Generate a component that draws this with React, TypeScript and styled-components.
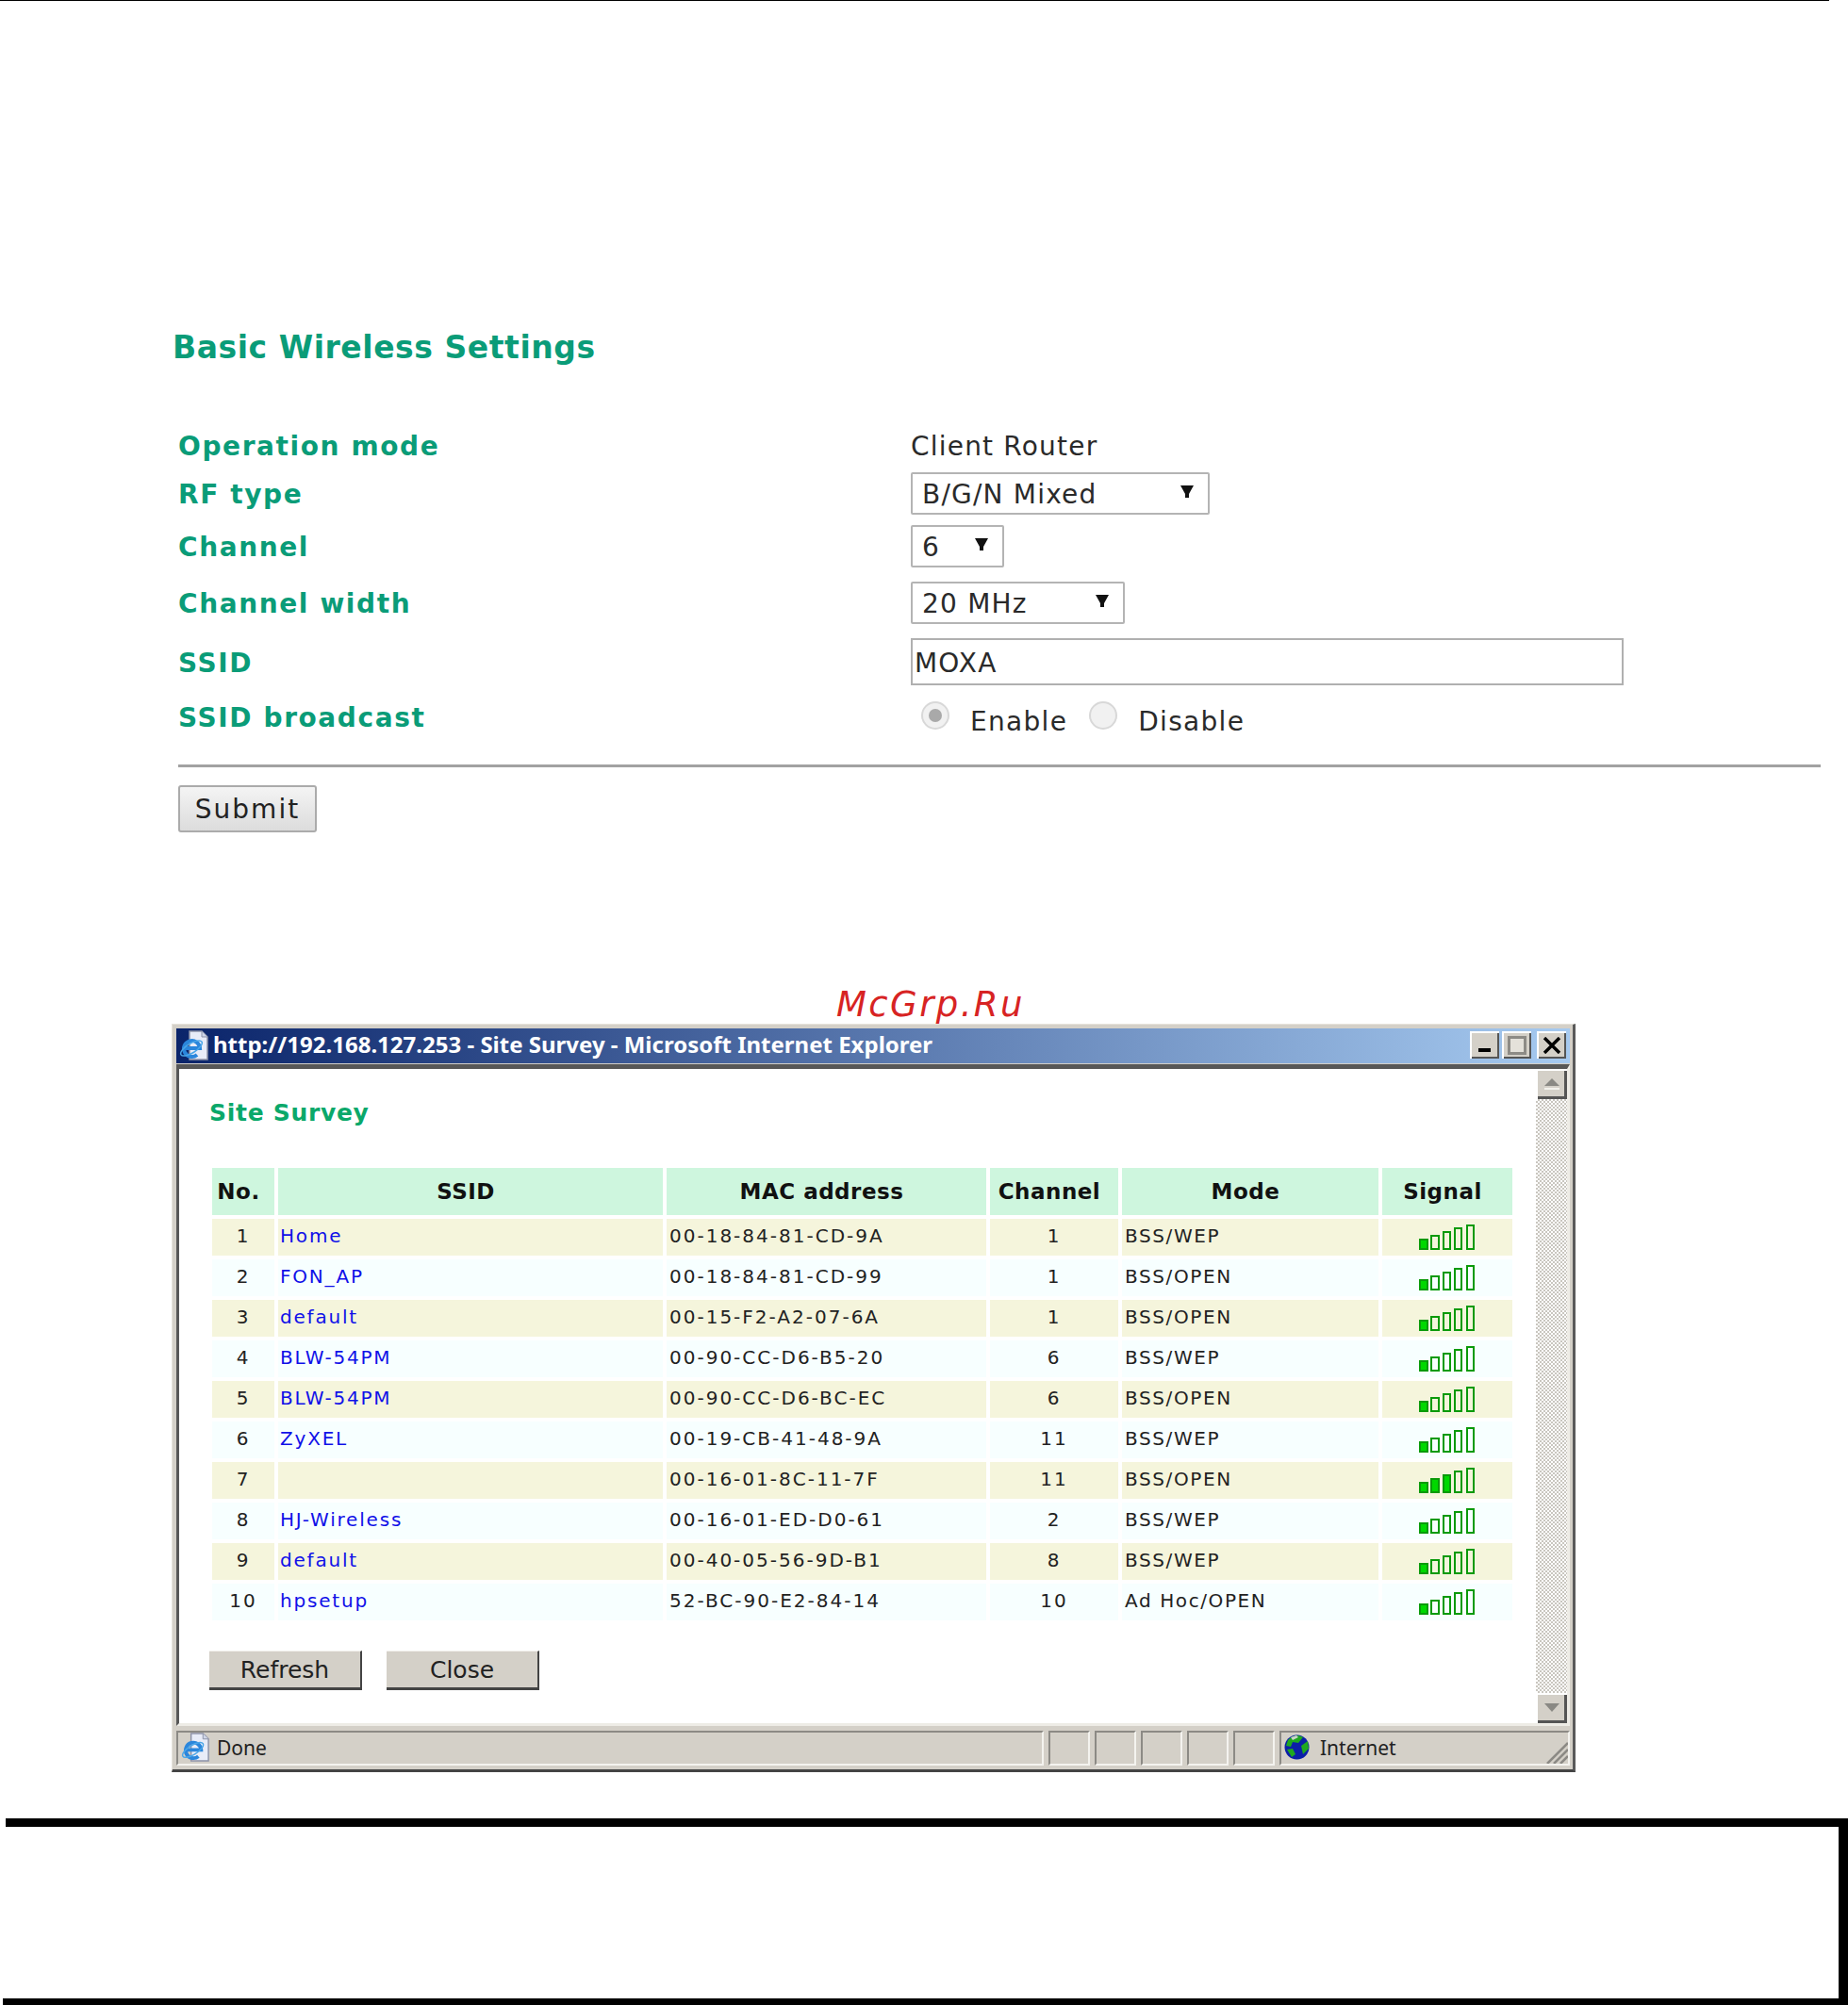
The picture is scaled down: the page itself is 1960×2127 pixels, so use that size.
import React from "react";
import styled, { createGlobalStyle } from "styled-components";

const GlobalStyle = createGlobalStyle`
  * { box-sizing: border-box; }
  html, body { margin: 0; padding: 0; background: #fff; }
  body { font-family: "DejaVu Sans", sans-serif; color: #222; }
`;

const Page = styled.div`
  width: 1960px;
  height: 2127px;
  overflow: hidden;
  background: #fff;
`;

const TopRule = styled.div`
  width: 1940px;
  height: 1px;
  background: #000;
`;

const FormSection = styled.section`
  margin: 348px 0 0 183px;
`;

const Heading = styled.h1`
  margin: 0;
  font-size: 33px;
  line-height: 40px;
  letter-spacing: 0.55px;
  font-weight: 700;
  color: #0a9c78;
`;

const FormGrid = styled.div`
  margin: 68px 0 0 6px;
  width: 1742px;
`;

const FormRow = styled.div<{ $top?: number }>`
  display: flex;
  align-items: baseline;
  margin-top: ${(p) => p.$top ?? 0}px;
`;

const FieldLabel = styled.div`
  width: 777px;
  flex: none;
  font-size: 28px;
  font-weight: 700;
  letter-spacing: 1.6px;
  color: #0a9c78;
`;

const FieldValue = styled.div`
  font-size: 28px;
  letter-spacing: 1.2px;
  color: #2a2a2a;
`;

const SelectBox = styled.div<{ $width: number }>`
  width: ${(p) => p.$width}px;
  height: 45px;
  display: flex;
  align-items: center;
  justify-content: space-between;
  padding: 2px 14px 0 10px;
  background: #fff;
  border: 2px solid #b4b4b4;
  border-radius: 2px;
  font-size: 28px;
  letter-spacing: 1.2px;
  color: #2a2a2a;
`;

const TextInput = styled.div`
  width: 756px;
  height: 50px;
  display: flex;
  align-items: center;
  padding: 2px 0 0 2px;
  border: 2px solid #b0b0b0;
  font-size: 28px;
  letter-spacing: 1.2px;
  color: #2a2a2a;
`;

const RadioGroup = styled.div`
  display: flex;
  align-items: baseline;
  align-self: flex-start;
  margin-top: 4px;
  padding-left: 11px;
`;

const RadioDot = styled.span<{ $checked?: boolean }>`
  position: relative;
  top: -9px;
  display: inline-flex;
  align-items: center;
  justify-content: center;
  width: 30px;
  height: 30px;
  margin-right: 22px;
  border-radius: 50%;
  border: 2px solid #d8d8d8;
  background: #f1f1f1;
  &::after {
    content: "";
    width: 14px;
    height: 14px;
    border-radius: 50%;
    background: ${(p) => (p.$checked ? "#a9a9a9" : "transparent")};
  }
`;

const RadioText = styled.span`
  margin-right: 23px;
  font-size: 28px;
  letter-spacing: 1.3px;
  color: #2a2a2a;
`;

const Rule = styled.div`
  margin: 28px 0 0 6px;
  width: 1742px;
  height: 3px;
  background: #a2a2a2;
`;

const SubmitButton = styled.button`
  display: block;
  margin: 19px 0 0 6px;
  width: 147px;
  height: 50px;
  padding: 0;
  border: 2px solid #ababab;
  border-radius: 3px;
  background: linear-gradient(#f4f4f4, #dcdcdc);
  font-family: inherit;
  font-size: 28px;
  letter-spacing: 2px;
  color: #222;
`;

const Watermark = styled.div`
  margin: 162px 0 0 887px;
  font-size: 37px;
  line-height: 41px;
  font-style: italic;
  letter-spacing: 2.4px;
  color: #d72323;
`;

const Window = styled.div`
  margin: 0 0 0 182px;
  width: 1489px;
  height: 794px;
  padding: 4px 3px 3px 4px;
  display: flex;
  flex-direction: column;
  background: #d4d0c8;
  border-top: 1px solid #e6e3dc;
  border-left: 1px solid #e6e3dc;
  border-right: 3px solid #5a5a5a;
  border-bottom: 3px solid #444;
`;

const TitleBar = styled.div`
  flex: none;
  height: 37px;
  display: flex;
  align-items: center;
  padding: 0 4px 2px 3px;
  background: linear-gradient(90deg, #0a246a, #a6caf0);
`;

const TitleText = styled.div`
  flex: 1;
  margin: 0 0 2px 4px;
  font-family: "Noto Sans", sans-serif;
  font-size: 24px;
  font-weight: 700;
  color: #fff;
  white-space: nowrap;
`;

const CaptionButton = styled.div<{ $gap?: number }>`
  width: 31px;
  height: 29px;
  margin-left: ${(p) => p.$gap ?? 3}px;
  display: flex;
  align-items: center;
  justify-content: center;
  background: #d4d0c8;
  box-shadow: inset 2px 2px 0 #fff, inset -2px -2px 0 #555;
`;

const ClientFrame = styled.div`
  flex: none;
  height: 702px;
  margin-top: 1px;
  display: flex;
  border-top: 5px solid #575757;
  border-left: 3px solid #575757;
  border-bottom: 3px solid #eeece6;
  border-right: 3px solid #eeece6;
`;

const Content = styled.div`
  flex: 1;
  padding: 32px 0 0 32px;
  background: #fff;
`;

const SurveyTitle = styled.h2`
  margin: 0;
  font-size: 25px;
  line-height: 30px;
  letter-spacing: 0.7px;
  font-weight: 700;
  color: #0aa86a;
`;

const SurveyTable = styled.table`
  margin: 39px 0 0 -1px;
  table-layout: fixed;
  width: 1387px;
  border-collapse: separate;
  border-spacing: 4px;
`;

const HeadCell = styled.th`
  height: 50px;
  padding: 0 10px 0 0;
  background: #cef6de;
  font-size: 23px;
  font-weight: 700;
  letter-spacing: 0.5px;
  color: #111;
  text-align: center;
`;

const Row = styled.tr<{ $odd: boolean }>`
  & > td {
    background: ${(p) => (p.$odd ? "#f5f5dc" : "#f7ffff")};
  }
`;

const BodyCell = styled.td<{ $align?: string }>`
  height: 39px;
  padding: 0 3px 3px;
  font-size: 20px;
  letter-spacing: 2px;
  color: #222;
  text-align: ${(p) => p.$align ?? "left"};
  white-space: nowrap;
`;

const SignalCell = styled.td`
  height: 39px;
  padding: 0 3px;
`;

const SsidLink = styled.a`
  margin-left: -1px;
  color: #1010e8;
  letter-spacing: 1.8px;
`;

const ModeText = styled.span`
  letter-spacing: 1.6px;
`;

const ButtonRow = styled.div`
  display: flex;
  gap: 26px;
  margin-top: 28px;
`;

const FlatButton = styled.button`
  width: 162px;
  height: 42px;
  padding: 0;
  background: #d4d0c8;
  border: none;
  border-top: 1px solid #f2f0ec;
  border-right: 2px solid #444;
  border-bottom: 3px solid #444;
  font-family: inherit;
  font-size: 25px;
  color: #222;
`;

const Scrollbar = styled.div`
  flex: none;
  width: 33px;
  display: flex;
  flex-direction: column;
  justify-content: space-between;
  background: repeating-conic-gradient(#c9c6bf 0 25%, #fff 0 50%) 0 0 / 4px 4px;
`;

const ScrollButton = styled.div`
  height: 32px;
  display: flex;
  align-items: center;
  justify-content: center;
  background: #d4d0c8;
  box-shadow: inset 2px 2px 0 #fff, inset -3px -3px 0 #555;
`;

const StatusBar = styled.div`
  flex: 1;
  display: flex;
  gap: 5px;
  padding: 5px 0 1px 0;
`;

const StatusPanel = styled.div<{ $width?: number; $gap?: number }>`
  flex: ${(p) => (p.$width ? "none" : "1")};
  width: ${(p) => (p.$width ? `${p.$width}px` : "auto")};
  display: flex;
  align-items: center;
  gap: ${(p) => p.$gap ?? 7}px;
  padding: 0 0 2px 3px;
  border-top: 2px solid #8c8a85;
  border-left: 2px solid #8c8a85;
  border-right: 2px solid #f4f3ef;
  border-bottom: 2px solid #f4f3ef;
  font-family: "Noto Sans", sans-serif;
  font-size: 21px;
  color: #222;
  position: relative;
`;

const Grip = styled.svg`
  position: absolute;
  right: 0;
  bottom: 0;
`;

const BottomFrame = styled.div`
  margin: 49px 0 0 6px;
  height: 191px;
  border-top: 9px solid #000;
  border-right: 10px solid #000;
`;

const BottomBar = styled.div`
  margin-left: 3px;
  height: 8px;
  background: #000;
`;

const ArrowSvg = styled.svg`
  flex: none;
  margin-top: -6px;
`;

const SignalSvg = styled.svg`
  display: block;
  margin: 0 auto;
`;

const ArrowGlyph = () => (
  <ArrowSvg width="16" height="15" viewBox="0 0 16 15">
    <path d="M1 1H15L10 10V14H6V10Z" fill="#111" />
  </ArrowSvg>
);

const SignalBars = ({ filled }: { filled: number }) => {
  const bars = [
    { x: 1, w: 8, h: 11 },
    { x: 13, w: 8, h: 15 },
    { x: 26, w: 7, h: 19 },
    { x: 38, w: 7, h: 23 },
    { x: 51, w: 7, h: 26 },
  ];
  return (
    <SignalSvg width="60" height="27" viewBox="0 0 60 27">
      {bars.map((b, i) => (
        <rect
          key={b.x}
          x={b.x}
          y={27 - b.h}
          width={b.w}
          height={b.h - 1}
          fill={i < filled ? "#00d800" : "none"}
          stroke="#0a9a0a"
          strokeWidth="2"
        />
      ))}
    </SignalSvg>
  );
};

const IeIcon = ({ size }: { size: number }) => (
  <svg width={size} height={size} viewBox="0 0 32 32">
    <path d="M11 1H24L30 7V31H11Z" fill="#e8ecf8" stroke="#8d93a8" strokeWidth="1.5" />
    <path d="M24 1V7H30" fill="#cfd6e8" stroke="#8d93a8" strokeWidth="1" />
    <path d="M6 19H22A8.5 8.5 0 1 0 19 26" fill="none" stroke="#2a86dc" strokeWidth="4" />
    <ellipse
      cx="13"
      cy="19"
      rx="13"
      ry="5"
      transform="rotate(-32 13 19)"
      fill="none"
      stroke="#4aa6e8"
      strokeWidth="1.5"
    />
  </svg>
);

const Globe = () => (
  <svg width="27" height="27" viewBox="0 0 27 27">
    <circle cx="13.5" cy="13.5" r="13" fill="#0b1fa8" />
    <path d="M4 6C8 1 15 0 20 3L15 9L9 8L7 13L2 12Z" fill="#1fa81f" />
    <path d="M18 12L25 7L26 15L20 21Z" fill="#1fa81f" />
    <path d="M3 16L9 15L12 21L8 24Z" fill="#1fa81f" />
    <path d="M7 3L13 1L15 3L9 6Z" fill="#c8d4c8" />
  </svg>
);

const columns = [66, 408, 339, 136, 272, 138];
const headers = ["No.", "SSID", "MAC address", "Channel", "Mode", "Signal"];

const networks = [
  { ssid: "Home", mac: "00-18-84-81-CD-9A", channel: 1, mode: "BSS/WEP", signal: 1 },
  { ssid: "FON_AP", mac: "00-18-84-81-CD-99", channel: 1, mode: "BSS/OPEN", signal: 1 },
  { ssid: "default", mac: "00-15-F2-A2-07-6A", channel: 1, mode: "BSS/OPEN", signal: 1 },
  { ssid: "BLW-54PM", mac: "00-90-CC-D6-B5-20", channel: 6, mode: "BSS/WEP", signal: 1 },
  { ssid: "BLW-54PM", mac: "00-90-CC-D6-BC-EC", channel: 6, mode: "BSS/OPEN", signal: 1 },
  { ssid: "ZyXEL", mac: "00-19-CB-41-48-9A", channel: 11, mode: "BSS/WEP", signal: 1 },
  { ssid: "", mac: "00-16-01-8C-11-7F", channel: 11, mode: "BSS/OPEN", signal: 3 },
  { ssid: "HJ-Wireless", mac: "00-16-01-ED-D0-61", channel: 2, mode: "BSS/WEP", signal: 1 },
  { ssid: "default", mac: "00-40-05-56-9D-B1", channel: 8, mode: "BSS/WEP", signal: 1 },
  { ssid: "hpsetup", mac: "52-BC-90-E2-84-14", channel: 10, mode: "Ad Hoc/OPEN", signal: 1 },
];

export default function App() {
  return (
    <Page>
      <GlobalStyle />
      <TopRule />

      <FormSection>
        <Heading>Basic Wireless Settings</Heading>
        <FormGrid>
          <FormRow>
            <FieldLabel>Operation mode</FieldLabel>
            <FieldValue>Client Router</FieldValue>
          </FormRow>
          <FormRow $top={11}>
            <FieldLabel>RF type</FieldLabel>
            <SelectBox $width={317}>
              B/G/N Mixed <ArrowGlyph />
            </SelectBox>
          </FormRow>
          <FormRow $top={11}>
            <FieldLabel>Channel</FieldLabel>
            <SelectBox $width={99}>
              6 <ArrowGlyph />
            </SelectBox>
          </FormRow>
          <FormRow $top={15}>
            <FieldLabel>Channel width</FieldLabel>
            <SelectBox $width={227}>
              20 MHz <ArrowGlyph />
            </SelectBox>
          </FormRow>
          <FormRow $top={15}>
            <FieldLabel>SSID</FieldLabel>
            <TextInput>MOXA</TextInput>
          </FormRow>
          <FormRow $top={18}>
            <FieldLabel>SSID broadcast</FieldLabel>
            <RadioGroup>
              <RadioDot $checked />
              <RadioText>Enable</RadioText>
              <RadioDot />
              <RadioText>Disable</RadioText>
            </RadioGroup>
          </FormRow>
        </FormGrid>
        <Rule />
        <SubmitButton>Submit</SubmitButton>
      </FormSection>

      <Watermark>McGrp.Ru</Watermark>

      <Window>
        <TitleBar>
          <IeIcon size={32} />
          <TitleText>http://192.168.127.253 - Site Survey - Microsoft Internet Explorer</TitleText>
          <CaptionButton>
            <svg width="16" height="16" viewBox="0 0 16 16">
              <rect x="1" y="11" width="13" height="4" fill="#000" />
            </svg>
          </CaptionButton>
          <CaptionButton>
            <svg width="20" height="20" viewBox="0 0 20 20">
              <rect x="1.5" y="1.5" width="17" height="17" fill="#e4e1da" stroke="#8d8b86" strokeWidth="3" />
            </svg>
          </CaptionButton>
          <CaptionButton $gap={6}>
            <svg width="20" height="18" viewBox="0 0 20 18">
              <path d="M2 1L18 17M18 1L2 17" stroke="#000" strokeWidth="3.4" />
            </svg>
          </CaptionButton>
        </TitleBar>

        <ClientFrame>
          <Content>
            <SurveyTitle>Site Survey</SurveyTitle>
            <SurveyTable>
              <colgroup>
                {columns.map((w, i) => (
                  <col key={i} width={w} />
                ))}
              </colgroup>
              <thead>
                <tr>
                  {headers.map((h) => (
                    <HeadCell key={h}>{h}</HeadCell>
                  ))}
                </tr>
              </thead>
              <tbody>
                {networks.map((n, i) => (
                  <Row key={n.mac} $odd={i % 2 === 0}>
                    <BodyCell $align="center">{i + 1}</BodyCell>
                    <BodyCell>
                      <SsidLink>{n.ssid}</SsidLink>
                    </BodyCell>
                    <BodyCell>{n.mac}</BodyCell>
                    <BodyCell $align="center">{n.channel}</BodyCell>
                    <BodyCell>
                      <ModeText>{n.mode}</ModeText>
                    </BodyCell>
                    <SignalCell>
                      <SignalBars filled={n.signal} />
                    </SignalCell>
                  </Row>
                ))}
              </tbody>
            </SurveyTable>
            <ButtonRow>
              <FlatButton>Refresh</FlatButton>
              <FlatButton>Close</FlatButton>
            </ButtonRow>
          </Content>
          <Scrollbar>
            <ScrollButton>
              <svg width="18" height="14" viewBox="0 0 18 14">
                <path d="M9 1L17 9H1Z" fill="#8a8984" />
                <rect x="1" y="11" width="16" height="2" fill="#f2f1ec" />
              </svg>
            </ScrollButton>
            <ScrollButton>
              <svg width="18" height="12" viewBox="0 0 18 12">
                <path d="M1 1H17L9 10Z" fill="#8a8984" />
              </svg>
            </ScrollButton>
          </Scrollbar>
        </ClientFrame>

        <StatusBar>
          <StatusPanel>
            <IeIcon size={31} />
            Done
          </StatusPanel>
          <StatusPanel $width={44} />
          <StatusPanel $width={44} />
          <StatusPanel $width={44} />
          <StatusPanel $width={44} />
          <StatusPanel $width={44} />
          <StatusPanel $width={308} $gap={11}>
            <Globe />
            Internet
            <Grip width="24" height="24" viewBox="0 0 24 24">
              <path d="M2 24L24 2M9 24L24 9M16 24L24 16" stroke="#8c8a85" strokeWidth="2.5" />
            </Grip>
          </StatusPanel>
        </StatusBar>
      </Window>

      <BottomFrame />
      <BottomBar />
    </Page>
  );
}
